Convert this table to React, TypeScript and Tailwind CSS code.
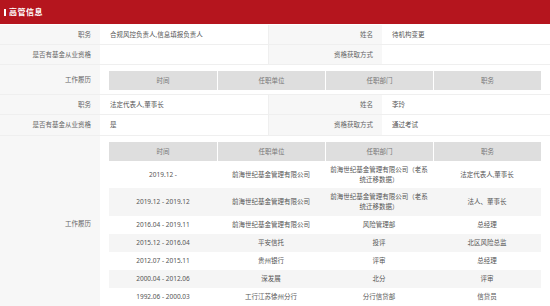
import React from "react";

const Label = ({ children, className = "" }: { children?: React.ReactNode; className?: string }) => (
  <div className={`bg-[#f7f7f7] flex items-center justify-end pr-[9px] text-[#666] ${className}`}>{children}</div>
);
const Value = ({ children, className = "" }: { children?: React.ReactNode; className?: string }) => (
  <div className={`flex items-center pl-[10px] text-[#555] ${className}`}>{children}</div>
);

type R = { c: [string, string, string, string]; h: string };
const rows: R[] = [
  { c: ["2019.12 -", "前海世纪基金管理有限公司", "前海世纪基金管理有限公司（老系统迁移数据）", "法定代表人,董事长"], h: "h-[27px]" },
  { c: ["2019.12 - 2019.12", "前海世纪基金管理有限公司", "前海世纪基金管理有限公司（老系统迁移数据）", "法人、董事长"], h: "h-[28px]" },
  { c: ["2016.04 - 2019.11", "前海世纪基金管理有限公司", "风险管理部", "总经理"], h: "h-[18px]" },
  { c: ["2015.12 - 2016.04", "平安信托", "投评", "北区风险总监"], h: "h-[18px]" },
  { c: ["2012.07 - 2015.11", "贵州银行", "评审", "总经理"], h: "h-[18px]" },
  { c: ["2000.04 - 2012.06", "深发展", "北分", "评审"], h: "h-[18px]" },
  { c: ["1992.06 - 2000.03", "工行江苏徐州分行", "分行信贷部", "信贷员"], h: "h-[18px]" },
];

const Head = () => (
  <div className="grid grid-cols-4 h-[19px] bg-[#dedede] text-[#777]">
    {["时间", "任职单位", "任职部门", "职务"].map((h, i) => (
      <div key={h} className={`flex items-center justify-center ${i > 0 ? "border-l border-white" : ""}`}>{h}</div>
    ))}
  </div>
);

const Table = ({ data }: { data: R[] }) => (
  <div className="w-[432px] mx-[9px]">
    <Head />
    {data.map((r, i) => (
      <div key={i} className={`grid grid-cols-4 text-[#555] ${r.h} ${i % 2 === 1 ? "bg-[#f5f5f5]" : "bg-white"}`}>
        {r.c.map((c, j) => (
          <div key={j} className="flex items-center justify-center text-center px-[4px] leading-[10px]">{c}</div>
        ))}
      </div>
    ))}
  </div>
);

export default function App() {
  return (
    <div className="w-[550px] h-[306px] overflow-hidden bg-white text-[6.5px] leading-[10px] font-['Noto_Sans','Noto_Sans_CJK_SC',sans-serif]">
      <div className="h-[24px] bg-[#b5151e] flex items-center pl-[4px] mb-[1px]">
        <div className="w-[2px] h-[7px] bg-white mr-[3px]" />
        <span className="text-white font-bold text-[8px] leading-none tracking-[0.5px]">高管信息</span>
      </div>
      <div className="grid grid-cols-[100px_169px_113px_168px]">
        <Label className="h-[20px] border-b border-[#efefef]">职务</Label>
        <Value className="h-[20px] border-b border-[#efefef] border-r">合规风控负责人,信息填报负责人</Value>
        <Label className="h-[20px] border-b border-[#efefef]">姓名</Label>
        <Value className="h-[20px] border-b border-[#efefef]">待机构变更</Value>

        <Label className="h-[20px] border-b border-[#efefef]">是否有基金从业资格</Label>
        <Value className="h-[20px] border-b border-[#efefef] border-r"></Value>
        <Label className="h-[20px] border-b border-[#efefef]">资格获取方式</Label>
        <Value className="h-[20px] border-b border-[#efefef]"></Value>

        <Label className="border-b border-[#efefef]">工作履历</Label>
        <div className="col-span-3 pt-[6px] pb-[4px] border-b border-[#efefef]">
          <Table data={[]} />
        </div>

        <Label className="h-[20px] border-b border-[#efefef]">职务</Label>
        <Value className="h-[20px] border-b border-[#efefef] border-r">法定代表人,董事长</Value>
        <Label className="h-[20px] border-b border-[#efefef]">姓名</Label>
        <Value className="h-[20px] border-b border-[#efefef]">李玲</Value>

        <Label className="h-[21px] border-b border-[#efefef]">是否有基金从业资格</Label>
        <Value className="h-[21px] border-b border-[#efefef] border-r">是</Value>
        <Label className="h-[21px] border-b border-[#efefef]">资格获取方式</Label>
        <Value className="h-[21px] border-b border-[#efefef]">通过考试</Value>

        <Label>工作履历</Label>
        <div className="col-span-3 pt-[6px] pb-[5px]">
          <Table data={rows} />
        </div>
      </div>
    </div>
  );
}
